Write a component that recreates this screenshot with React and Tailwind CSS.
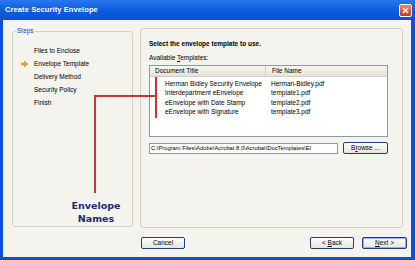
const font = { fontFamily: '"Liberation Sans", Arial, sans-serif' }

const steps = ['Files to Enclose', 'Envelope Template', 'Delivery Method', 'Security Policy', 'Finish']

const templates = [
  ['Herman Bidley Security Envelope', 'Herman-Bidley.pdf'],
  ['Interdepartment eEnvelope', 'template1.pdf'],
  ['eEnvelope with Date Stamp', 'template2.pdf'],
  ['eEnvelope with Signature', 'template3.pdf'],
]

function XpButton({ children, primary, className = '' }) {
  return (
    <div
      className={`h-[12px] rounded-[2px] border border-[#1c3f7a] bg-gradient-to-b from-white to-[#e6e4dc] flex items-center justify-center text-[6.5px] text-black whitespace-pre ${primary ? 'shadow-[inset_0_0_0_1px_#8fb0e8]' : ''} ${className}`}
    >
      {children}
    </div>
  )
}

function Arrow() {
  return (
    <svg width="7" height="6" viewBox="0 0 7 6" className="shrink-0">
      <path d="M0 2 H3.5 V0 L7 3 L3.5 6 V4 H0 Z" fill="#e8a526" stroke="#c07b10" strokeWidth="0.4" />
    </svg>
  )
}

export default function App() {
  return (
    <div className="w-[415px] h-[260px] flex flex-col bg-[#0a4fd4]" style={font}>
      {/* Title bar */}
      <div className="h-[20px] flex items-center justify-between pl-[5px] pr-[3px] bg-gradient-to-b from-[#2a78ee] via-[#0b5ce0] to-[#0a52d2]">
        <span className="text-white font-bold text-[7.5px] tracking-[0.1px]">Create Security Envelope</span>
        <div className="w-[13px] h-[13px] rounded-[2px] border border-white bg-gradient-to-b from-[#e98466] to-[#c5391c] flex items-center justify-center">
          <svg width="7" height="7" viewBox="0 0 7 7">
            <path d="M1 1 L6 6 M6 1 L1 6" stroke="white" strokeWidth="1.4" />
          </svg>
        </div>
      </div>

      {/* Body */}
      <div className="flex-1 ml-[3px] mr-[4px] mb-[3px] bg-[#f4f3ee] relative flex flex-col">
        <div className="flex pt-[7px] pl-[9px] gap-[7px] h-[208px]">
          {/* Steps */}
          <fieldset className="w-[121px] h-[200px] border border-[#d5d2c4] rounded-[3px] px-0 pb-0 pt-[9px] m-0">
            <legend className="ml-[3px] px-[1px] text-[6.5px] text-[#1549c4] leading-[8px]">Steps</legend>
            <div className="flex flex-col">
              {steps.map((s, i) => (
                <div key={s} className="h-[13px] flex items-center text-[6.5px] text-black">
                  <div className="w-[21px] pl-[8px] flex items-center">{i === 1 && <Arrow />}</div>
                  <span>{s}</span>
                </div>
              ))}
            </div>
          </fieldset>

          {/* Right panel */}
          <div className="w-[263px] h-[200px] mt-[1px] border border-[#d5d2c4] rounded-[3px] pl-[8px] pt-[10px]">
            <div className="text-[6.5px] font-bold text-black leading-[9px]">Select the envelope template to use.</div>
            <div className="text-[6.5px] text-black leading-[9px] mt-[5px]">
              Available <span className="underline">T</span>emplates:
            </div>
            <div className="w-[239px] h-[72px] mt-[3px] border border-[#8a9aa8] bg-white">
              <div className="h-[11px] flex bg-gradient-to-b from-[#f7f6ef] to-[#e6e4d8] border-b border-[#d3d0c2] text-[6.5px] text-black">
                <div className="w-[116px] pl-[5px] flex items-center border-r border-[#d3d0c2]">Document Title</div>
                <div className="pl-[6px] flex items-center">File Name</div>
              </div>
              <div className="pt-[2px]">
                {templates.map(([t, f]) => (
                  <div key={t} className="h-[9.5px] flex items-center text-[6.5px] text-black">
                    <div className="w-[116px] pl-[15px]">{t}</div>
                    <div className="pl-[5px]">{f}</div>
                  </div>
                ))}
              </div>
            </div>
            <div className="flex items-center mt-[5px] gap-[5px]">
              <div className="w-[189px] h-[11px] border border-[#8a9aa8] bg-white text-[5.8px] text-black flex items-center pl-[1px] overflow-hidden whitespace-nowrap">
                C:\Program Files\Adobe\Acrobat 8.0\Acrobat\DocTemplates\EI
              </div>
              <XpButton className="w-[45px]">
                B<span className="underline">r</span>owse ...
              </XpButton>
            </div>
          </div>
        </div>

        {/* Buttons */}
        <div className="flex items-center pl-[138px] pr-[4px] mt-[9px]">
          <XpButton className="w-[44px]">Cancel</XpButton>
          <div className="flex-1" />
          <XpButton className="w-[44px]">
            {'< '}<span className="underline">B</span>ack
          </XpButton>
          <XpButton primary className="w-[45px] ml-[8px]">
            <span className="underline">N</span>{'ext >'}
          </XpButton>
        </div>

        {/* Annotation overlay */}
        <div className="absolute left-[152px] top-[57px] w-[2px] h-[41px] bg-[#c8372d]" />
        <div className="absolute left-[91px] top-[75px] w-[62px] h-[2px] bg-[#c8372d]" />
        <div className="absolute left-[91px] top-[75px] w-[2px] h-[98px] bg-[#c8372d]" />
        <div
          className="absolute left-[62px] top-[179px] w-[62px] text-center text-[#1b2a80] font-bold text-[9.5px] leading-[13px]"
          style={{ fontFamily: '"DejaVu Sans", Verdana, sans-serif' }}
        >
          Envelope
          <br />
          Names
        </div>
      </div>
    </div>
  )
}
